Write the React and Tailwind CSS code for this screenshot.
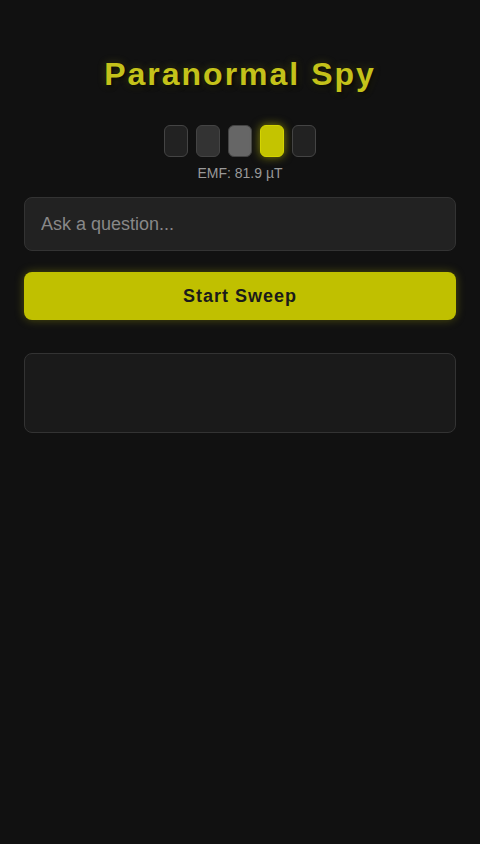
import React, { useState } from 'react';

const levels = ['bg-[#222]', 'bg-[#333]', 'bg-[#666]', 'active', 'bg-[#222]'];

export default function App() {
    const [question, setQuestion] = useState('');

    return (
        <div className="min-h-[844px] bg-[#111111] px-6 pt-14 font-['Liberation_Sans',Arial,sans-serif]">
            <h1 className="text-center text-[32px] leading-[37px] font-bold tracking-[2px] text-[#c4c21a] [text-shadow:2px_2px_4px_rgba(0,0,0,0.8),0_0_8px_rgba(196,194,26,0.25)]">
                Paranormal Spy
            </h1>

            <div className="mt-8 flex justify-center gap-2">
                {levels.map((lvl, i) =>
                    lvl === 'active' ? (
                        <div
                            key={i}
                            className="h-8 w-6 rounded-md border border-[#d4d400] bg-[#c4c400] shadow-[0_0_10px_rgba(212,212,0,0.6)]"
                        />
                    ) : (
                        <div key={i} className={`h-8 w-6 rounded-md border border-[#444] ${lvl}`} />
                    )
                )}
            </div>
            <p className="mt-2 text-center text-sm leading-4 text-[#999]">EMF: 81.9 µT</p>

            <input
                value={question}
                onChange={(e) => setQuestion(e.target.value)}
                placeholder="Ask a question..."
                className="mt-4 block h-[54px] w-full rounded-lg border border-[#333] bg-[#222] px-4 text-lg text-[#ddd] placeholder:text-[#888] outline-none"
            />

            <button className="mt-[21px] block h-12 w-full rounded-lg bg-[#c0c000] text-lg font-bold tracking-[1px] text-[#1a1a1a] shadow-[0_0_10px_rgba(192,192,0,0.35)]">
                Start Sweep
            </button>

            <div className="mt-[33px] h-20 rounded-lg border border-[#333] bg-[#1a1a1a]" />
        </div>
    );
}
